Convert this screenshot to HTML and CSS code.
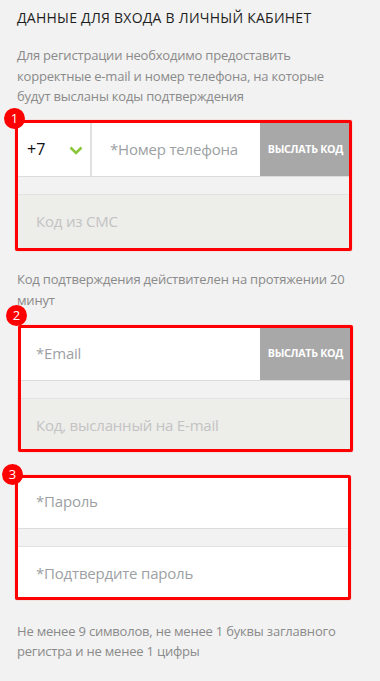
FILE: index.html
```html
<!DOCTYPE html>
<html lang="ru">
<head>
  <meta charset="UTF-8">
  <meta name="viewport" content="width=device-width, initial-scale=1.0">
  <title>Регистрация</title>
  <link rel="stylesheet" href="styles.css">
</head>
<body>
  <div class="page">
    <h2 class="title">Данные для входа в личный кабинет</h2>
    <p class="note note-top">Для регистрации необходимо предоставить корректные e-mail и номер телефона, на которые будут высланы коды подтверждения</p>

    <!-- Phone -->
    <div class="group group-1">
      <div class="row">
        <div class="prefix">
          <span>+7</span>
          <svg class="chevron" width="14" height="9" viewBox="0 0 14 9"><polyline points="1.5,1.5 7,7 12.5,1.5" fill="none" stroke="#8cc43c" stroke-width="2.6"/></svg>
        </div>
        <div class="field">*Номер телефона</div>
        <div class="send">Выслать код</div>
      </div>
      <div class="row row-code">
        <div class="field field-code">Код из СМС</div>
      </div>
      <div class="frame"></div>
      <div class="badge">1</div>
    </div>

    <p class="note note-mid">Код подтверждения действителен на протяжении 20 минут</p>

    <!-- Email -->
    <div class="group group-2">
      <div class="row">
        <div class="field">*Email</div>
        <div class="send">Выслать код</div>
      </div>
      <div class="row row-code">
        <div class="field field-code">Код, высланный на E-mail</div>
      </div>
      <div class="frame"></div>
      <div class="badge">2</div>
    </div>

    <!-- Password -->
    <div class="group group-3">
      <div class="row">
        <div class="field">*Пароль</div>
      </div>
      <div class="row row-second">
        <div class="field">*Подтвердите пароль</div>
      </div>
      <div class="frame"></div>
      <div class="badge">3</div>
    </div>

    <p class="note note-bottom">Не менее 9 символов, не менее 1 буквы заглавного регистра и не менее 1 цифры</p>
  </div>
</body>
</html>
```

FILE: styles.css
```css
/* General styling */
body {
  margin: 0;
  background-color: #f2f2f2;
  font-family: "Open Sans", Arial, sans-serif;
}

.page {
  width: 334px;
  padding: 8px 29px 20px 17px;
}

.title {
  margin: 0;
  font-size: 14px;
  font-weight: 400;
  line-height: 20px;
  letter-spacing: 0.25px;
  text-transform: uppercase;
  color: #1e1e1e;
}

.note {
  margin: 0;
  font-size: 13px;
  letter-spacing: -0.2px;
  color: #8a8a8a;
}

.note-top {
  margin-top: 17px;
  line-height: 20.5px;
}

.note-mid {
  margin-top: 21px;
  line-height: 21px;
}

.note-bottom {
  margin-top: 21px;
  line-height: 20px;
}

/* Form groups */
.group {
  position: relative;
  display: flex;
  flex-direction: column;
  gap: 17px;
}

.group-1 { margin-top: 16px; }
.group-2 { margin-top: 16px; }
.group-3 { margin-top: 23px; }

.row {
  display: flex;
  height: 53px;
  background-color: #fff;
  border-bottom: 1px solid #dcdcdc;
}

.row-code,
.row-second {
  border-bottom: none;
  border-top: 1px solid #e2e2e2;
}

.row-code {
  background-color: #ededea;
}

.prefix {
  display: flex;
  align-items: center;
  justify-content: space-between;
  width: 56px;
  padding: 0 7px 0 10px;
  border-right: 2px solid #e0e0e0;
  font-size: 16px;
  color: #111;
}

.chevron {
  margin-top: 2px;
}

.field {
  flex: 1;
  display: flex;
  align-items: center;
  padding-left: 19px;
  font-size: 15px;
  letter-spacing: -0.2px;
  color: #9c9fa3;
}

.prefix + .field {
  padding-left: 18px;
}

.field-code {
  color: #c3c3c3;
}

.send {
  display: flex;
  align-items: center;
  justify-content: center;
  width: 91px;
  background-color: #a8a8a8;
  color: #fff;
  font-size: 10.7px;
  font-weight: 700;
  text-transform: uppercase;
  letter-spacing: -0.3px;
}

/* Red annotation frames and badges */
.frame {
  position: absolute;
  border: 3px solid #ff0000;
  border-radius: 2px;
  box-shadow: 0 0 1px rgba(255, 0, 0, 0.6);
}

.group-1 .frame { left: -2px; top: -3px; right: -1px; bottom: -3px; }
.group-2 .frame { left: 1px; top: -2px; right: -2px; bottom: 0; }
.group-3 .frame { left: -2px; top: 0; right: 0; bottom: 0; }

.badge {
  position: absolute;
  width: 21px;
  height: 21px;
  border-radius: 50%;
  background-color: #ff0000;
  color: #fff;
  font-size: 13px;
  line-height: 21px;
  text-align: center;
}

.group-1 .badge { left: -13px; top: -15px; }
.group-2 .badge { left: -11px; top: -22px; }
.group-3 .badge { left: -15px; top: -11px; }
```
